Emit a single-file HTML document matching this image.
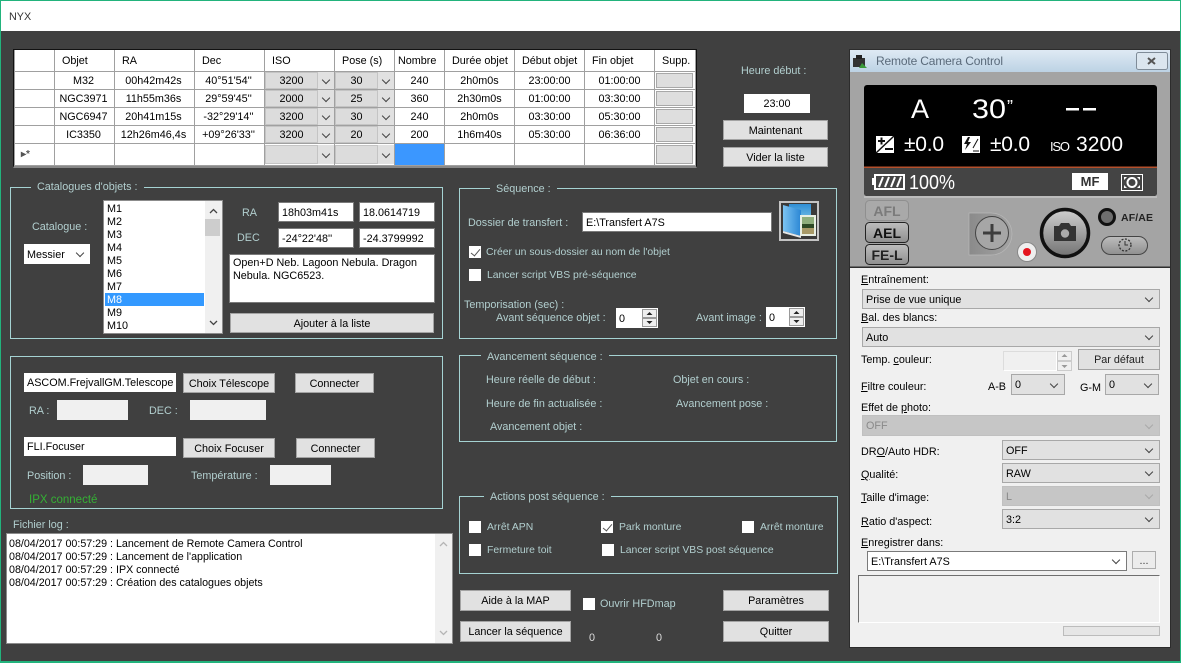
<!DOCTYPE html>
<html><head><meta charset="utf-8"><title>NYX</title>
<style>
html,body{margin:0;padding:0;width:1181px;height:663px;overflow:hidden;background:#404040}
body{position:relative;font-family:"Liberation Sans",sans-serif;font-size:10.8px;color:#000}
div,span{box-sizing:border-box}
.a{position:absolute}
.t{position:absolute;white-space:nowrap;line-height:14px;height:14px;color:#b2cfcf;margin-top:1px}
.ck{font-size:10.4px}
.k{color:#000}
.g{position:absolute;border:1px solid #a5d3d3}
.lg{position:absolute;height:14px;line-height:14px;background:#404040;color:#b2cfcf;padding:0 6px;white-space:nowrap;margin-top:0}
.lg span{position:relative;top:1px}
.b{position:absolute;background:#e1e1e1;border:1px solid #a3a3a3;text-align:center;color:#000;white-space:nowrap;display:flex;align-items:center;justify-content:center;padding-top:1px}
.i{position:absolute;background:#fff;border:1px solid #7a7a7a;color:#000;white-space:nowrap;padding-left:3px;padding-top:1px;display:flex;align-items:center;overflow:hidden}
.d{position:absolute;background:#f0f0f0;border:1px solid #b5b5b5}
.c{position:absolute;width:12px;height:12px;background:#fff}
.c.x::after{content:"";position:absolute;left:4px;top:1px;width:4px;height:8px;border-right:1.5px solid #555;border-bottom:1.5px solid #555;transform:rotate(40deg)}
.s{position:absolute;background:#e1e1e1;border:1px solid #a8a8a8;color:#000;padding-left:3px;padding-top:1px;display:flex;align-items:center;white-space:nowrap}
.s::after,.ch::after{content:"";position:absolute;right:7px;top:50%;margin-top:-4px;width:5px;height:5px;border-right:1px solid #444;border-bottom:1px solid #444;transform:rotate(45deg)}
.s.n{justify-content:center;padding:1px 0 0;background:#dcdcdc;border-color:#c4c4c4}
.s.n::after{display:none}
.ch::after{right:5px}
.s.off{background:#c6c6c6;border-color:#c0c0c0;color:#8a8a8a}
.s.off::after{border-color:#a9a9a9}
.ch{position:absolute;background:#e1e1e1}
table{position:absolute;left:14px;top:50px;border-collapse:collapse;table-layout:fixed;background:#fff;width:681px}
td{border:1px solid #a0a0a0;padding:1px 0 0;text-align:center;white-space:nowrap;overflow:hidden;font-size:10.8px;line-height:12px}
tr.h td{text-align:left;padding-left:7px;border-top:0}
</style></head><body>
<!-- frame -->
<div class="a" style="left:0;top:0;width:1181px;height:31px;background:#fff;border-top:1px solid #22b37c"></div>
<div class="a" style="left:0;top:0;width:1px;height:663px;background:#22b37c"></div>
<div class="a" style="left:1180px;top:0;width:1px;height:663px;background:#22b37c"></div>
<div class="a" style="left:0;top:661px;width:1181px;height:2px;background:#22b37c"></div>
<div class="t k" style="left:9px;top:9px;color:#333">NYX</div>

<!-- grid -->
<div class="a" style="left:13px;top:49px;width:684px;height:119px;background:#fff;border:1px solid #111;border-bottom:2px solid #888"></div>
<table><colgroup><col style="width:40px"><col style="width:60px"><col style="width:80px"><col style="width:70px"><col style="width:70px"><col style="width:60px"><col style="width:50px"><col style="width:70px"><col style="width:70px"><col style="width:70px"><col style="width:41px"></colgroup>
<tr class="h" style="height:21px"><td></td><td>Objet</td><td>RA</td><td>Dec</td><td>ISO</td><td>Pose (s)</td><td style="padding-left:3px">Nombre</td><td style="padding-left:7px">Durée objet</td><td style="padding-left:7px">Début objet</td><td>Fin objet</td><td style="padding-left:7px">Supp.</td></tr>
<tr style="height:18px"><td></td><td style="padding-right:2px">M32</td><td style="padding-right:2px">00h42m42s</td><td style="padding-right:2px">40°51'54''</td><td></td><td></td><td>240</td><td>2h0m0s</td><td>23:00:00</td><td>01:00:00</td><td></td></tr>
<tr style="height:18px"><td></td><td style="padding-right:2px">NGC3971</td><td style="padding-right:2px">11h55m36s</td><td style="padding-right:2px">29°59'45''</td><td></td><td></td><td>360</td><td>2h30m0s</td><td>01:00:00</td><td>03:30:00</td><td></td></tr>
<tr style="height:18px"><td></td><td style="padding-right:2px">NGC6947</td><td style="padding-right:2px">20h41m15s</td><td style="padding-right:2px">-32°29'14''</td><td></td><td></td><td>240</td><td>2h0m0s</td><td>03:30:00</td><td>05:30:00</td><td></td></tr>
<tr style="height:18px"><td></td><td style="padding-right:2px">IC3350</td><td style="padding-right:2px">12h26m46,4s</td><td style="padding-right:2px">+09°26'33''</td><td></td><td></td><td>200</td><td>1h6m40s</td><td>05:30:00</td><td>06:36:00</td><td></td></tr>
<tr style="height:22px"><td style="text-align:left;padding-left:6px;font-size:10px;font-weight:bold;color:#555">▸*</td><td></td><td></td><td></td><td></td><td></td><td style="background:#3b97ff"></td><td></td><td></td><td></td><td></td></tr>
</table>
<!-- combos -->
<div class="s n" style="left:265px;top:72px;width:53px;height:17px"><span>3200</span></div><div class="ch" style="left:318px;top:72px;width:16px;height:17px"></div>
<div class="s n" style="left:335px;top:72px;width:43px;height:17px"><span>30</span></div><div class="ch" style="left:378px;top:72px;width:16px;height:17px"></div>
<div class="s n" style="left:265px;top:90px;width:53px;height:17px"><span>2000</span></div><div class="ch" style="left:318px;top:90px;width:16px;height:17px"></div>
<div class="s n" style="left:335px;top:90px;width:43px;height:17px"><span>25</span></div><div class="ch" style="left:378px;top:90px;width:16px;height:17px"></div>
<div class="s n" style="left:265px;top:108px;width:53px;height:17px"><span>3200</span></div><div class="ch" style="left:318px;top:108px;width:16px;height:17px"></div>
<div class="s n" style="left:335px;top:108px;width:43px;height:17px"><span>30</span></div><div class="ch" style="left:378px;top:108px;width:16px;height:17px"></div>
<div class="s n" style="left:265px;top:126px;width:53px;height:17px"><span>3200</span></div><div class="ch" style="left:318px;top:126px;width:16px;height:17px"></div>
<div class="s n" style="left:335px;top:126px;width:43px;height:17px"><span>20</span></div><div class="ch" style="left:378px;top:126px;width:16px;height:17px"></div>
<div class="s n" style="left:265px;top:145px;width:53px;height:19px"></div><div class="ch" style="left:318px;top:145px;width:16px;height:19px"></div>
<div class="s n" style="left:335px;top:145px;width:43px;height:19px"></div><div class="ch" style="left:378px;top:145px;width:16px;height:19px"></div>
<div class="d" style="left:656px;top:73px;width:37px;height:15px;background:#dedede;border-color:#a8a8a8"></div>
<div class="d" style="left:656px;top:91px;width:37px;height:15px;background:#dedede;border-color:#a8a8a8"></div>
<div class="d" style="left:656px;top:109px;width:37px;height:15px;background:#dedede;border-color:#a8a8a8"></div>
<div class="d" style="left:656px;top:127px;width:37px;height:15px;background:#dedede;border-color:#a8a8a8"></div>
<div class="d" style="left:656px;top:145px;width:37px;height:19px;background:#dedede;border-color:#a8a8a8"></div>

<!-- heure -->
<div class="t" style="left:741px;top:63px">Heure début :</div>
<div class="i" style="left:744px;top:94px;width:66px;height:19px;justify-content:center;padding:1px 0 0;border:0">23:00</div>
<div class="b" style="left:723px;top:120px;width:105px;height:20px">Maintenant</div>
<div class="b" style="left:723px;top:147px;width:105px;height:20px">Vider la liste</div>

<!-- catalogues -->
<div class="g" style="left:10px;top:187px;width:433px;height:152px"></div>
<div class="lg" style="left:31px;top:179px"><span>Catalogues d'objets :</span></div>
<div class="t" style="left:32px;top:219px">Catalogue :</div>
<div class="s" style="left:24px;top:244px;width:66px;height:20px;background:#fff;border:0">Messier</div>
<div class="a" style="left:103px;top:200px;width:120px;height:134px;background:#fff;border:1px solid #8c8c8c"></div>
<div class="a" style="left:105px;top:293px;width:99px;height:13px;background:#3399ff"></div>
<div class="t k" style="left:107px;top:201px">M1</div>
<div class="t k" style="left:107px;top:214px">M2</div>
<div class="t k" style="left:107px;top:227px">M3</div>
<div class="t k" style="left:107px;top:240px">M4</div>
<div class="t k" style="left:107px;top:253px">M5</div>
<div class="t k" style="left:107px;top:266px">M6</div>
<div class="t k" style="left:107px;top:279px">M7</div>
<div class="t" style="left:107px;top:292px;color:#fff">M8</div>
<div class="t k" style="left:107px;top:305px">M9</div>
<div class="t k" style="left:107px;top:318px">M10</div>
<div class="a" style="left:205px;top:201px;width:17px;height:132px;background:#f0f0f0"></div>
<div class="a" style="left:205px;top:219px;width:15px;height:17px;background:#cdcdcd"></div>
<svg class="a" style="left:205px;top:201px" width="17" height="132"><path d="M5 12l3.500-3.500L12 12M5 120l3.500 3.500L12 120" fill="none" stroke="#444" stroke-width="1.300"/></svg>
<div class="t" style="left:242px;top:205px">RA</div>
<div class="t" style="left:237px;top:230px">DEC</div>
<div class="i" style="left:278px;top:202px;width:76px;height:20px">18h03m41s</div>
<div class="i" style="left:359px;top:202px;width:76px;height:20px">18.0614719</div>
<div class="i" style="left:278px;top:228px;width:76px;height:20px">-24°22'48''</div>
<div class="i" style="left:359px;top:228px;width:76px;height:20px">-24.3799992</div>
<div class="i" style="left:229px;top:254px;width:206px;height:49px;display:block;white-space:normal;line-height:13px;padding:2px 3px">Open+D Neb. Lagoon Nebula. Dragon Nebula. NGC6523.</div>
<div class="b" style="left:230px;top:313px;width:204px;height:20px">Ajouter à la liste</div>

<!-- sequence -->
<div class="g" style="left:459px;top:188px;width:378px;height:151px"></div>
<div class="lg" style="left:490px;top:181px"><span>Séquence :</span></div>
<div class="t" style="left:468px;top:215px">Dossier de transfert :</div>
<div class="i" style="left:582px;top:212px;width:190px;height:20px">E:\Transfert A7S</div>
<svg class="a" style="left:779px;top:201px" width="40" height="40"><rect x="1" y="1" width="38" height="38" fill="#3a3a3a" stroke="#c4c4c4" stroke-width="2"/><defs><linearGradient id="f1" x1="0" x2="1"><stop offset="0" stop-color="#7cc4f2"/><stop offset="1" stop-color="#2a86d4"/></linearGradient><linearGradient id="f2" x1="0" y1="0" x2="0" y2="1"><stop offset="0" stop-color="#2f8fd4"/><stop offset="1" stop-color="#8fd0ee"/></linearGradient></defs><rect x="10" y="3" width="22" height="22" fill="url(#f2)"/><path d="M4 4l18 5v26L4 30z" fill="url(#f1)"/><path d="M4 30l18 5v2L4 32z" fill="#e8e8e8"/><rect x="21" y="14" width="16" height="21" fill="#e8efe4"/><rect x="23" y="16" width="12" height="7" fill="#8fae7c"/><rect x="23" y="23" width="12" height="4" fill="#2e4a25"/><rect x="23" y="27" width="12" height="6" fill="#a89a68"/></svg>
<div class="c x" style="left:469px;top:246px"></div>
<div class="t ck" style="left:486px;top:245px">Créer un sous-dossier au nom de l'objet</div>
<div class="c" style="left:469px;top:269px"></div>
<div class="t ck" style="left:487px;top:268px">Lancer script VBS pré-séquence</div>
<div class="t" style="left:464px;top:297px">Temporisation (sec) :</div>
<div class="t" style="left:496px;top:310px">Avant séquence objet :</div>
<div class="i" style="left:616px;top:308px;width:42px;height:20px;border:0">0</div>
<div class="t" style="left:696px;top:310px">Avant image :</div>
<div class="i" style="left:766px;top:307px;width:39px;height:20px;border:0">0</div>
<svg class="a" style="left:642px;top:309px" width="15" height="18"><rect x=".5" y=".5" width="14" height="8" fill="#eee" stroke="#999"/><rect x=".5" y="9.500" width="14" height="8" fill="#eee" stroke="#999"/><path d="M7.500 3l3 3h-6zM7.500 15l3-3h-6z" fill="#222"/></svg>
<svg class="a" style="left:789px;top:308px" width="15" height="18"><rect x=".5" y=".5" width="14" height="8" fill="#eee" stroke="#999"/><rect x=".5" y="9.500" width="14" height="8" fill="#eee" stroke="#999"/><path d="M7.500 3l3 3h-6zM7.500 15l3-3h-6z" fill="#222"/></svg>

<!-- avancement -->
<div class="g" style="left:459px;top:355px;width:378px;height:87px"></div>
<div class="lg" style="left:481px;top:349px"><span>Avancement séquence :</span></div>
<div class="t" style="left:486px;top:372px">Heure réelle de début :</div>
<div class="t" style="left:673px;top:372px">Objet en cours :</div>
<div class="t" style="left:486px;top:396px">Heure de fin actualisée :</div>
<div class="t" style="left:676px;top:396px">Avancement pose :</div>
<div class="t" style="left:490px;top:419px">Avancement objet :</div>

<!-- scope -->
<div class="g" style="left:10px;top:356px;width:433px;height:153px"></div>
<div class="i" style="left:24px;top:373px;width:152px;height:19px;border:0">ASCOM.FrejvallGM.Telescope</div>
<div class="b" style="left:183px;top:373px;width:92px;height:20px">Choix Télescope</div>
<div class="b" style="left:295px;top:373px;width:79px;height:20px">Connecter</div>
<div class="t" style="left:29px;top:403px">RA :</div>
<div class="d" style="left:57px;top:400px;width:71px;height:20px;border:0"></div>
<div class="t" style="left:149px;top:403px">DEC :</div>
<div class="d" style="left:190px;top:400px;width:76px;height:20px;border:0"></div>
<div class="i" style="left:24px;top:437px;width:152px;height:19px;border:0">FLI.Focuser</div>
<div class="b" style="left:183px;top:438px;width:92px;height:20px">Choix Focuser</div>
<div class="b" style="left:296px;top:438px;width:79px;height:20px">Connecter</div>
<div class="t" style="left:27px;top:468px">Position :</div>
<div class="d" style="left:83px;top:465px;width:65px;height:20px;border:0"></div>
<div class="t" style="left:191px;top:468px">Température :</div>
<div class="d" style="left:270px;top:465px;width:61px;height:20px;border:0"></div>
<div class="t" style="left:29px;top:492px;color:#35b035;font-size:11.500px">IPX connecté</div>

<!-- log -->
<div class="t" style="left:13px;top:517px">Fichier log :</div>
<div class="a" style="left:6px;top:533px;width:447px;height:111px;background:#fff;border:1px solid #8c8c8c"></div>
<div class="t k" style="left:9px;top:536px;font-size:10.700px">08/04/2017 00:57:29 : Lancement de Remote Camera Control</div>
<div class="t k" style="left:9px;top:549px;font-size:10.700px">08/04/2017 00:57:29 : Lancement de l'application</div>
<div class="t k" style="left:9px;top:562px;font-size:10.700px">08/04/2017 00:57:29 : IPX connecté</div>
<div class="t k" style="left:9px;top:575px;font-size:10.700px">08/04/2017 00:57:29 : Création des catalogues objets</div>
<div class="a" style="left:435px;top:534px;width:17px;height:109px;background:#f0f0f0"></div>
<svg class="a" style="left:435px;top:534px" width="17" height="109"><path d="M5 12l3.500-3.500L12 12M5 97l3.500 3.500L12 97" fill="none" stroke="#b5b5b5" stroke-width="1.300"/></svg>

<!-- post -->
<div class="g" style="left:459px;top:496px;width:379px;height:78px"></div>
<div class="lg" style="left:484px;top:489px"><span>Actions post séquence :</span></div>
<div class="c" style="left:469px;top:521px"></div><div class="t ck" style="left:487px;top:520px">Arrêt APN</div>
<div class="c x" style="left:601px;top:521px"></div><div class="t ck" style="left:619px;top:520px">Park monture</div>
<div class="c" style="left:742px;top:521px"></div><div class="t ck" style="left:760px;top:520px">Arrêt monture</div>
<div class="c" style="left:469px;top:544px"></div><div class="t ck" style="left:487px;top:543px">Fermeture toit</div>
<div class="c" style="left:602px;top:544px"></div><div class="t ck" style="left:620px;top:543px">Lancer script VBS post séquence</div>

<div class="b" style="left:460px;top:590px;width:111px;height:21px">Aide à la MAP</div>
<div class="b" style="left:460px;top:621px;width:111px;height:21px">Lancer la séquence</div>
<div class="c" style="left:583px;top:598px"></div><div class="t" style="left:600px;top:596px">Ouvrir HFDmap</div>
<div class="b" style="left:723px;top:590px;width:106px;height:21px">Paramètres</div>
<div class="b" style="left:723px;top:621px;width:106px;height:21px">Quitter</div>
<div class="t" style="left:589px;top:630px;color:#ddd">0</div>
<div class="t" style="left:656px;top:630px;color:#ddd">0</div>

<!-- remote camera window -->
<div class="a" style="left:849px;top:49px;width:322px;height:599px;background:#f0f0f0;border:1px solid #2c2c2c"></div>
<svg class="a" style="left:850px;top:50px" width="320" height="218" font-family="Liberation Sans,sans-serif">
<defs>
<linearGradient id="tb" x1="0" y1="0" x2="0" y2="1"><stop offset="0" stop-color="#dfeaf4"/><stop offset="1" stop-color="#bcd2e4"/></linearGradient>
<linearGradient id="sh" x1="0" y1="0" x2="0" y2="1"><stop offset="0" stop-color="#cfcfcf"/><stop offset="1" stop-color="#737373"/></linearGradient>
<linearGradient id="sq" x1="0" y1="0" x2="1" y2="0"><stop offset="0" stop-color="#8a8a8a"/><stop offset="1" stop-color="#a4a4a4"/></linearGradient>
<linearGradient id="bt" x1="0" y1="0" x2="0" y2="1"><stop offset="0" stop-color="#bdbdbd"/><stop offset="1" stop-color="#8f8f8f"/></linearGradient>
</defs>
<rect width="320" height="22" fill="url(#tb)"/>
<rect y="22" width="320" height="195" fill="#a4a4a4"/>
<rect y="216.500" width="320" height="1.500" fill="#2e2e2e"/>
<path d="M3 8h12v9H3z" fill="#333"/><path d="M6 5h6v4H6z" fill="#222"/><path d="M9 18l3-5 5 5z" fill="#3a9a3a"/>
<text x="26" y="15" font-size="12" fill="#5a6a7a" textLength="127">Remote Camera Control</text>
<rect x="286.500" y="2.500" width="31" height="17" rx="2" fill="#dbe6ef" stroke="#7f8c98"/>
<path d="M298 8l7 6M305 8l-7 6" stroke="#555" stroke-width="2"/>
<rect x="14" y="35" width="293" height="111" rx="3" fill="#000"/>
<path d="M14 117h293v26a3 3 0 0 1-3 3H17a3 3 0 0 1-3-3z" fill="#444"/>
<rect x="14" y="116.500" width="293" height="1.500" fill="#b5502c"/>
<rect x="14" y="146" width="293" height="2" fill="#bcbcbc"/>
<text x="61" y="68" font-size="27" fill="#fff">A</text>
<text x="122" y="68" font-size="27" fill="#fff" textLength="34" lengthAdjust="spacingAndGlyphs">30</text>
<text x="157" y="63" font-size="18" fill="#fff">”</text>
<rect x="216" y="58" width="13" height="2.500" fill="#fff"/><rect x="233" y="58" width="13" height="2.500" fill="#fff"/>
<rect x="26" y="86" width="18" height="17" fill="#fff"/><path d="M26 103l18-17" stroke="#111" stroke-width="1.500"/><path d="M28 91h7M31.500 87.500v7" stroke="#111" stroke-width="2"/><path d="M35 99h8" stroke="#111" stroke-width="2"/>
<text x="54" y="101" font-size="21" fill="#fff" textLength="40">±0.0</text>
<rect x="112" y="86" width="18" height="17" fill="#fff"/><path d="M118 87l-4 7h3l-2 6 6-8h-3l2-5z" fill="#111"/><path d="M123 101h6M123 98l5-9" stroke="#111"/>
<text x="140" y="101" font-size="21" fill="#fff" textLength="40">±0.0</text>
<text x="200" y="101" font-size="13" fill="#fff" textLength="20">ISO</text>
<text x="226" y="101" font-size="21" fill="#fff" textLength="47">3200</text>
<rect x="24" y="124" width="31" height="16" fill="#fff"/><rect x="26" y="126" width="27" height="12" fill="#444"/><rect x="22" y="128" width="2" height="7" fill="#fff"/>
<path d="M29 137l4-10M35 137l4-10M41 137l4-10M47 137l4-10" stroke="#fff" stroke-width="2"/>
<text x="59" y="139" font-size="20" fill="#fff" textLength="46" lengthAdjust="spacingAndGlyphs">100%</text>
<rect x="222" y="123" width="36" height="17" fill="#fff"/>
<text x="240" y="136" font-size="13" font-weight="bold" fill="#333" text-anchor="middle">MF</text>
<rect x="271.500" y="124.500" width="21" height="16" fill="#444" stroke="#fff"/><circle cx="282" cy="132.500" r="4.500" fill="none" stroke="#fff" stroke-width="2"/><path d="M274 127h3l-3 3zM290 127h-3l3 3zM274 138h3l-3-3zM290 138h-3l3-3z" fill="#fff"/>
<rect x="15.500" y="150.500" width="43" height="20" rx="4" fill="#a9a9a9" stroke="#8f8f8f"/>
<text x="37" y="166" font-size="14" font-weight="bold" fill="#7b7b7b" text-anchor="middle">AFL</text>
<rect x="15.500" y="172.500" width="43" height="20" rx="4" fill="url(#bt)" stroke="#222"/>
<text x="37" y="188" font-size="14" font-weight="bold" fill="#111" text-anchor="middle">AEL</text>
<rect x="15.500" y="194.500" width="43" height="20" rx="4" fill="url(#bt)" stroke="#222"/>
<text x="37" y="210" font-size="14" font-weight="bold" fill="#222" text-anchor="middle">FE-L</text>
<path d="M119 163h22a21 21 0 0 1 0 42h-22z" fill="url(#sq)" stroke="#b8b8b8" stroke-width=".7"/>
<circle cx="142" cy="183" r="16.500" fill="#a6a6a6" stroke="#444" stroke-width="1"/>
<path d="M142 174v18M133 183h18" stroke="#3d3d3d" stroke-width="3"/>
<circle cx="177" cy="202" r="9.500" fill="#eee" stroke="#888"/><circle cx="177" cy="202" r="4" fill="#e4141e"/>
<circle cx="215" cy="183" r="23.500" fill="url(#sh)" stroke="#111" stroke-width="3.500"/>
<path d="M209 176l2-3h8l2 3h5v15h-22v-15z" fill="#333"/><circle cx="215" cy="183.500" r="4.200" fill="#aaa"/>
<circle cx="257" cy="167" r="7.500" fill="#6e6e6e" stroke="#111" stroke-width="3"/>
<text x="271" y="171" font-size="10.500" font-weight="bold" fill="#222" textLength="32">AF/AE</text>
<rect x="251.500" y="186.500" width="46" height="18" rx="9" fill="url(#bt)" stroke="#444"/>
<circle cx="275" cy="195" r="6" fill="none" stroke="#333" stroke-dasharray="2 1.500" stroke-width="1.300"/><path d="M275 191v4h3" stroke="#333" fill="none"/>
</svg>

<div class="t k" style="left:861px;top:272px"><u>E</u>ntraînement:</div>
<div class="s" style="left:862px;top:289px;width:298px;height:20px">Prise de vue unique</div>
<div class="t k" style="left:861px;top:310px"><u>B</u>al. des blancs:</div>
<div class="s" style="left:862px;top:327px;width:298px;height:20px">Auto</div>
<div class="t k" style="left:861px;top:352px">Temp. <u>c</u>ouleur:</div>
<div class="a" style="left:1003px;top:351px;width:54px;height:20px;background:#f0f0f0;border:1px solid #dcdcdc;border-right-color:#fff;border-bottom-color:#fff"></div>
<svg class="a" style="left:1057px;top:351px" width="15" height="20"><rect x=".5" y=".5" width="14" height="9" fill="#f0f0f0" stroke="#ccc"/><rect x=".5" y="10.500" width="14" height="9" fill="#f0f0f0" stroke="#ccc"/><path d="M7.500 3l3 3h-6zM7.500 17l3-3h-6z" fill="#999"/></svg>
<div class="b" style="left:1078px;top:349px;width:82px;height:21px;color:#222">Par défaut</div>
<div class="t k" style="left:861px;top:379px"><u>F</u>iltre couleur:</div>
<div class="t k" style="left:988px;top:379px">A-B</div>
<div class="s" style="left:1011px;top:374px;width:54px;height:21px">0</div>
<div class="t k" style="left:1080px;top:380px">G-M</div>
<div class="s" style="left:1105px;top:374px;width:54px;height:21px">0</div>
<div class="t k" style="left:861px;top:400px">Effet de <u>p</u>hoto:</div>
<div class="s off" style="left:862px;top:415px;width:298px;height:21px">OFF</div>
<div class="t k" style="left:861px;top:444px">DR<u>O</u>/Auto HDR:</div>
<div class="s" style="left:1002px;top:440px;width:158px;height:20px">OFF</div>
<div class="t k" style="left:861px;top:467px"><u>Q</u>ualité:</div>
<div class="s" style="left:1002px;top:463px;width:158px;height:20px">RAW</div>
<div class="t k" style="left:861px;top:490px"><u>T</u>aille d'image:</div>
<div class="s off" style="left:1002px;top:486px;width:158px;height:20px">L</div>
<div class="t k" style="left:861px;top:514px"><u>R</u>atio d'aspect:</div>
<div class="s" style="left:1002px;top:509px;width:158px;height:20px">3:2</div>
<div class="t k" style="left:861px;top:535px"><u>E</u>nregistrer dans:</div>
<div class="s" style="left:867px;top:551px;width:260px;height:20px;background:#fff;border-color:#7a7a7a">E:\Transfert A7S</div>
<div class="b" style="left:1132px;top:551px;width:24px;height:18px;background:#ececec;border-color:#adadad;color:#333">...</div>
<div class="a" style="left:858px;top:575px;width:302px;height:48px;background:#f0f0f0;border:1px solid;border-color:#6f6f6f #fff #fff #6f6f6f"></div>
<div class="a" style="left:1063px;top:626px;width:97px;height:10px;background:#e6e6e6;border:1px solid #bcbcbc"></div>
</body></html>
